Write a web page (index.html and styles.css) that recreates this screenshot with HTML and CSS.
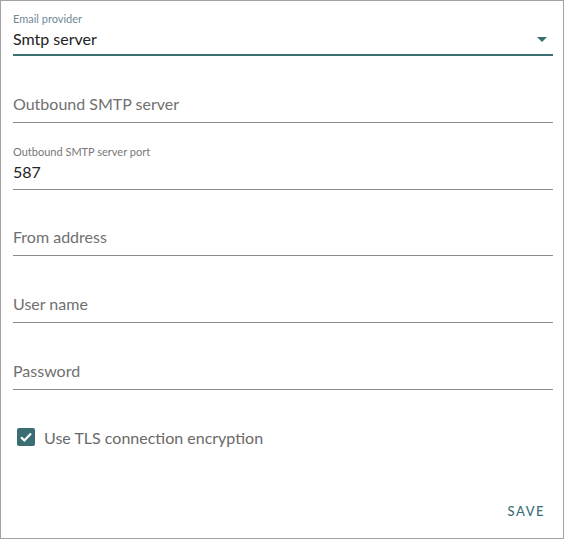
FILE: index.html
```html
<!DOCTYPE html>
<html>
<head>
<meta charset="utf-8">
<link rel="stylesheet" href="styles.css">
</head>
<body>
<div class="panel">
  <div class="fields">
    <div class="field focused">
      <div class="label">Email provider</div>
      <div class="value select">
        <span>Smtp server</span>
        <svg class="arrow" width="10" height="5" viewBox="0 0 10 5"><path d="M0 0 L10 0 L5 5 Z" fill="#3b6e72"/></svg>
      </div>
    </div>
    <div class="field">
      <div class="placeholder">Outbound SMTP server</div>
    </div>
    <div class="field">
      <div class="label">Outbound SMTP server port</div>
      <div class="value">587</div>
    </div>
    <div class="field">
      <div class="placeholder">From address</div>
    </div>
    <div class="field">
      <div class="placeholder">User name</div>
    </div>
    <div class="field">
      <div class="placeholder">Password</div>
    </div>
  </div>
  <label class="check">
    <span class="box">
      <svg width="18" height="18" viewBox="0 0 18 18"><path d="M4 9.2 L7.4 12.4 L14 5.6" fill="none" stroke="#fff" stroke-width="2.2"/></svg>
    </span>
    <span class="check-text">Use TLS connection encryption</span>
  </label>
  <div class="actions">
    <span class="save">SAVE</span>
  </div>
</div>
</body>
</html>
```
FILE: styles.css
```css
html, body {
  margin: 0;
  padding: 0;
  background: #fff;
}
body {
  font-family: "Lato", "Open Sans", sans-serif;
}
.panel {
  box-sizing: border-box;
  width: 564px;
  height: 539px;
  border: 1px solid #a3a3a3;
  padding: 0 10px 0 12px;
  display: flex;
  flex-direction: column;
}
.fields {
  display: flex;
  flex-direction: column;
}
.field {
  box-sizing: border-box;
  height: 66.8px;
  border-bottom: 1px solid #8d8d8d;
  display: flex;
  flex-direction: column;
  justify-content: flex-end;
}
.field.focused {
  border-bottom: 2px solid #3b6e72;
  height: 55px;
}
.label {
  font-size: 11px;
  line-height: 14px;
  color: #777;
  margin-bottom: 3px;
}
.focused .label {
  color: #6f8a95;
}
.value {
  font-size: 16px;
  line-height: 20px;
  color: #222;
  padding-bottom: 7px;
}
.focused .value {
  padding-bottom: 5px;
}
.select {
  display: flex;
  align-items: center;
  justify-content: space-between;
}
.arrow {
  margin-right: 6px;
}
.placeholder {
  font-size: 16px;
  line-height: 20px;
  color: #707070;
  padding-bottom: 8px;
}
.check {
  display: flex;
  align-items: center;
  margin-top: 38px;
  padding-left: 4px;
}
.box {
  width: 18px;
  height: 18px;
  border-radius: 2px;
  background: #3b6e72;
  display: flex;
}
.check-text {
  margin-left: 9px;
  font-size: 16px;
  color: #6a6a6a;
}
.actions {
  margin-top: auto;
  display: flex;
  justify-content: flex-end;
  padding: 0 8px 19px 0;
}
.save {
  font-size: 13px;
  letter-spacing: 1.5px;
  color: #3b6e78;
  font-weight: 500;
}
```
